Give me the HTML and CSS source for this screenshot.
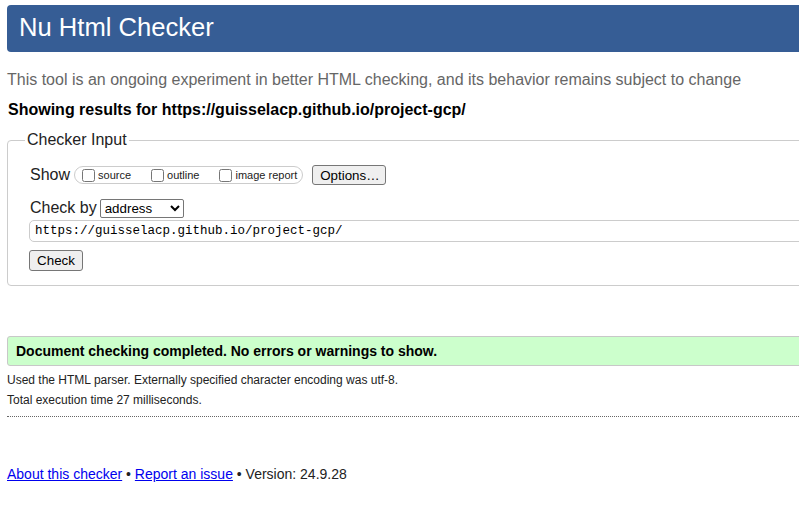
FILE: index.html
```html
<!DOCTYPE html>
<html lang="en">
<head>
<meta charset="utf-8">
<title>Nu Html Checker</title>
<link rel="stylesheet" href="styles.css">
</head>
<body>
<div class="page">
  <h1 class="banner">Nu Html Checker</h1>
  <p class="subtitle">This tool is an ongoing experiment in better HTML checking, and its behavior remains subject to change</p>
  <p class="showing">Showing results for https://guisselacp.github.io/project-gcp/</p>

  <fieldset class="checker">
    <legend class="legend">Checker Input</legend>
    <div class="form">
      <div class="row">
        <span class="label">Show</span>
        <span class="group">
          <label class="opt"><input type="checkbox" class="cb">source</label>
          <label class="opt"><input type="checkbox" class="cb">outline</label>
          <label class="opt last"><input type="checkbox" class="cb">image report</label>
        </span>
        <button type="button" class="btn options">Options…</button>
      </div>
      <div class="row row-by">
        <span class="label">Check by</span>
        <select class="sel"><option>address</option></select>
      </div>
      <div class="url">https://guisselacp.github.io/project-gcp/</div>
      <button type="button" class="btn check">Check</button>
    </div>
  </fieldset>

  <div class="success">Document checking completed. No errors or warnings to show.</div>
  <p class="info">Used the HTML parser. Externally specified character encoding was utf-8.</p>
  <p class="info">Total execution time 27 milliseconds.</p>
  <div class="sep"></div>

  <p class="footer"><a href="#">About this checker</a> • <a href="#">Report an issue</a> • Version: 24.9.28</p>
</div>
</body>
</html>
```

FILE: styles.css
```css
html {
  overflow: hidden;
  background: #fff;
}

body {
  margin: 0;
  font-family: "Liberation Sans", Arial, sans-serif;
  color: #222;
}

.page {
  width: 1000px;
  padding: 5px 0 0 7px;
}

.banner {
  margin: 0;
  height: 47px;
  line-height: 45px;
  padding-left: 12px;
  background: #365d95;
  color: #fff;
  font-size: 25.6px;
  font-weight: normal;
  border-radius: 4px;
}

.subtitle {
  margin: 18px 0 0;
  font-size: 16px;
  line-height: 20px;
  color: #666;
}

.showing {
  margin: 10px 0 0 1px;
  font-size: 16px;
  line-height: 20px;
  font-weight: bold;
  color: #000;
}

.checker {
  margin: 10px 0 0;
  padding: 15px 0 14px 17px;
  border: 1px solid #ccc;
  border-radius: 4px;
}

.legend {
  padding: 0 2px;
  font-size: 16px;
  line-height: 20px;
  color: #222;
}

.form {
  padding-left: 4px;
}

.row {
  display: flex;
  align-items: center;
  height: 20px;
}

.label {
  font-size: 16px;
  line-height: 20px;
  margin-left: 1px;
}

.group {
  display: flex;
  align-items: center;
  height: 16px;
  margin-left: 4px;
  padding: 0 5px 0 3px;
  border: 1px solid #ccc;
  border-radius: 9px;
  font-size: 11px;
}

.opt {
  display: flex;
  align-items: center;
  margin-right: 16px;
}

.opt.last {
  margin-right: 0;
}

.cb {
  width: 13px;
  height: 13px;
  margin: 0 3px 0 4px;
}

.btn {
  font-family: "Liberation Sans", Arial, sans-serif;
  font-size: 13.33px;
  color: #000;
  background: #efefef;
  border: 1px solid #767676;
  border-radius: 3px;
  padding: 0 7px;
}

.options {
  margin-left: 9px;
  height: 20px;
  width: 74px;
}

.row-by {
  margin-top: 13px;
}

.sel {
  margin-left: 3px;
  width: 84px;
  height: 19px;
  font-family: "Liberation Sans", Arial, sans-serif;
  font-size: 13.33px;
  color: #000;
  border: 1px solid #767676;
  border-radius: 2px;
  background: #fff;
}

.url {
  margin-top: 2px;
  height: 20px;
  line-height: 20px;
  padding-left: 5px;
  border: 1px solid #ccc;
  border-radius: 5px;
  font-family: "Liberation Mono", "Courier New", monospace;
  font-size: 12.5px;
  color: #000;
}

.check {
  display: block;
  margin-top: 8px;
  width: 54px;
  height: 21px;
}

.success {
  margin-top: 50px;
  height: 28px;
  line-height: 28px;
  padding-left: 8px;
  background: #ccffcc;
  border: 1px solid #c8c8c8;
  border-radius: 3px;
  font-size: 14px;
  font-weight: bold;
  color: #000;
}

.info {
  margin: 0;
  font-size: 12px;
  line-height: 20px;
}

.success + .info {
  margin-top: 4px;
}

.sep {
  margin-top: 6px;
  border-top: 1px dotted #666;
}

.footer {
  margin: 47px 0 0;
  font-size: 14px;
  line-height: 20px;
}

.footer a {
  color: #00e;
}
```
